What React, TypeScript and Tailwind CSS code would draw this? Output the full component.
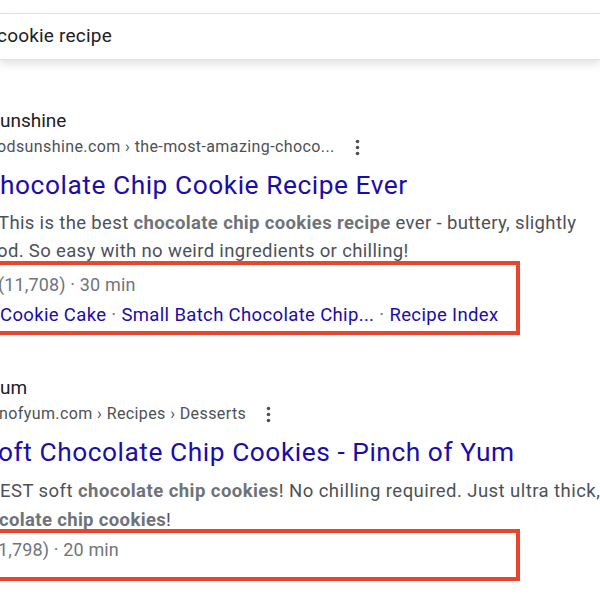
import React from "react";

const Dots = () => (
  <svg width="5" height="17" viewBox="0 0 5 17" className="inline-block">
    <circle cx="2.5" cy="2.5" r="1.8" fill="#4d5156" />
    <circle cx="2.5" cy="8.5" r="1.8" fill="#4d5156" />
    <circle cx="2.5" cy="14.5" r="1.8" fill="#4d5156" />
  </svg>
);

export default function App() {
  return (
    <div
      className="w-[600px] h-[600px] bg-white overflow-hidden"
      style={{ fontFamily: "Roboto, Arial, sans-serif" }}
    >
      {/* search bar */}
      <div className="mt-[13px] h-[47px] border-y border-[#dfe1e5] bg-white shadow-[0_4px_8px_rgba(32,33,36,0.13)] flex items-center">
        <span className="ml-[-3px] text-[19px] tracking-[0.2px] text-[#202124] whitespace-nowrap">cookie recipe</span>
      </div>

      {/* result 1 */}
      <div className="mt-[48px]">
        <div className="h-[26px] leading-[26px] text-[19px] text-[#202124]">unshine</div>
        <div className="h-[26px] leading-[26px] flex items-center whitespace-nowrap">
          <span className="ml-[-3px] text-[16px] tracking-[0.4px] text-[#4d5156]">odsunshine.com › the-most-amazing-choco...</span>
          <span className="ml-[20px] flex items-center"><Dots /></span>
        </div>
        <div className="mt-[7px] h-[36px] leading-[36px] text-[26.3px] tracking-[0.55px] text-[#1a0dab] whitespace-nowrap">
          hocolate Chip Cookie Recipe Ever
        </div>
        <div className="mt-[6px] ml-[-2px] text-[18.5px] tracking-[0.35px] leading-[28px] text-[#4d5156] whitespace-nowrap">
          <div>
            This is the best <b className="font-bold text-[#6f7378]">chocolate chip cookies recipe</b> ever - buttery, slightly
          </div>
          <div className="ml-[-1px]">od. So easy with no weird ingredients or chilling!</div>
        </div>
        <div className="mt-[-4px] w-[520px] border-4 border-l-0 border-[#e8452f] pt-[5px] pb-[1px]">
          <div className="h-[30px] leading-[30px] text-[18px] tracking-[0.15px] text-[#70757a] ml-[-2px] whitespace-nowrap">(11,708) · 30 min</div>
          <div className="h-[30px] leading-[30px] text-[18.5px] tracking-[0.35px] text-[#1a0dab] whitespace-nowrap">
            Cookie Cake <span className="text-[#70757a]">·</span> Small Batch Chocolate Chip...{" "}
            <span className="text-[#70757a]">·</span> Recipe Index
          </div>
        </div>
      </div>

      {/* result 2 */}
      <div className="mt-[40px]">
        <div className="h-[26px] leading-[26px] text-[19px] text-[#202124]">um</div>
        <div className="h-[26px] leading-[26px] flex items-center whitespace-nowrap">
          <span className="ml-[-1px] text-[16px] tracking-[0.4px] text-[#4d5156]">nofyum.com › Recipes › Desserts</span>
          <span className="ml-[20px] flex items-center"><Dots /></span>
        </div>
        <div className="mt-[7px] h-[36px] leading-[36px] text-[26.3px] tracking-[0.55px] text-[#1a0dab] whitespace-nowrap ml-[-2px]">
          oft Chocolate Chip Cookies - Pinch of Yum
        </div>
        <div className="mt-[7px] text-[18.5px] tracking-[0.35px] leading-[29px] text-[#4d5156] whitespace-nowrap">
          <div className="tracking-[0.45px]">
            EST soft <b className="font-bold text-[#6f7378]">chocolate chip cookies</b>! No chilling required. Just ultra thick,
          </div>
          <div className="ml-[-1px]">
            <b className="font-bold text-[#6f7378]">colate chip cookies</b>!
          </div>
        </div>
        <div className="mt-[-6px] w-[520px] h-[52px] border-4 border-l-0 border-[#e8452f] pt-[2px]">
          <div className="h-[30px] leading-[30px] text-[18px] tracking-[0.15px] text-[#70757a] ml-[-2px] whitespace-nowrap">1,798) · 20 min</div>
        </div>
      </div>
    </div>
  );
}
